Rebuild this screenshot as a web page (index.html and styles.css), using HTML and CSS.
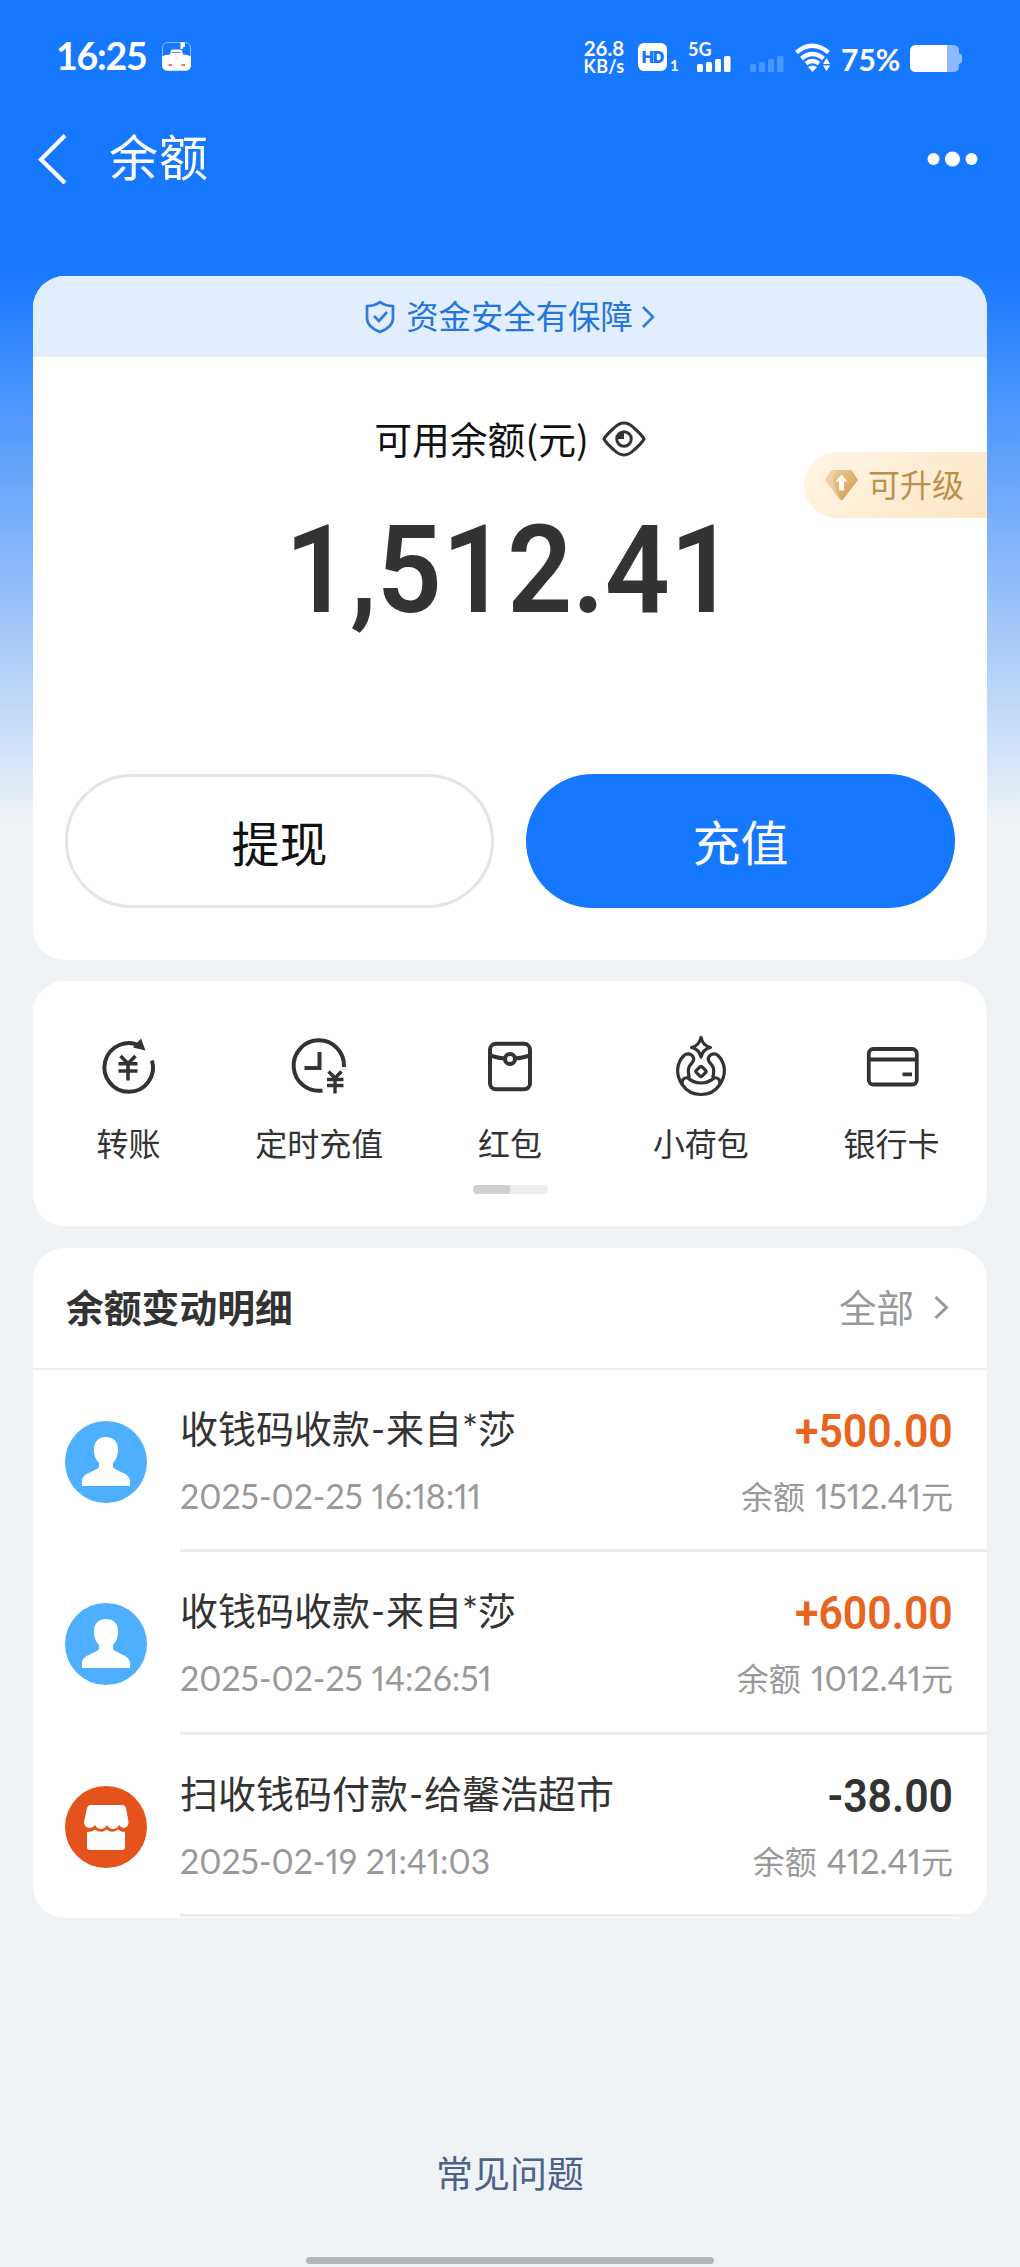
FILE: index.html
```html
<!DOCTYPE html>
<html lang="zh-CN">
<head>
<meta charset="utf-8">
<title>余额</title>
<link rel="stylesheet" href="styles.css">
</head>
<body>
<div class="page">
  <div class="status">
    <span class="clock">16:25</span>
    <svg class="app-icon" width="29" height="29" viewBox="0 0 29 29"><rect x=".5" y=".5" width="28" height="28" rx="5" fill="none" stroke="#8dbcff" stroke-width="1"/><path d="M0 14.500Q3 12.500 8 12.500L9 8.500Q9.500 7.500 11 7.500H17.500Q19.500 7.500 20 8.500L21 12.500Q26 12.500 29 14.500V23Q29 28.500 23 28.500H6Q0 28.500 0 23Z" fill="#fff"/><path d="M18.500 .5h4.500v4.500h-2v2h-2.500z" fill="#fff"/><path d="M9.500 10.500h9" stroke="#5a9cf5" stroke-width="1"/><path d="M6.500 23h3.500M19.500 23h3.500" stroke="#d9532d" stroke-width="1.400"/><path d="M13.500 15.800h2" stroke="#e8b28a" stroke-width="1"/></svg>
    <div class="speed"><span class="rate">26.8</span><span class="unit">KB/s</span></div>
    <div class="hd">HD</div>
    <span class="sim">1</span>
    <div class="net"><span class="gen">5G</span>
      <svg width="34" height="16" viewBox="0 0 34 16" fill="#fff"><rect x="0" y="8" width="6" height="8" rx="1.500"/><rect x="9" y="6" width="6" height="10" rx="1.500"/><rect x="18" y="3" width="6" height="13" rx="1.500"/><rect x="27" y="0" width="6.500" height="16" rx="1.500"/></svg>
    </div>
    <svg class="weak" width="34" height="16" viewBox="0 0 34 16" fill="#4a95ff"><rect x="0" y="8" width="6" height="8" rx="1.500"/><rect x="9" y="6" width="6" height="10" rx="1.500"/><rect x="18" y="3" width="6" height="13" rx="1.500"/><rect x="27" y="0" width="6.500" height="16" rx="1.500"/></svg>
    <svg class="wifi" width="36" height="29" viewBox="0 0 36 29"><g fill="none" stroke="#fff" stroke-width="4.200"><path d="M1.500 9.500Q17 -4 33.500 9.500"/><path d="M6.500 15.500Q17.500 6.500 28.500 15.500"/><path d="M11 20.500Q17.500 15.500 24 20.500"/></g><path d="M13 24Q17.500 21 22 24L17.500 29Z" fill="#fff"/><path d="M28 21l3.500-6 3.500 6zM28 22.500h7L31.500 28z" fill="#fff"/></svg>
    <span class="percent">75%</span>
    <svg class="battery" width="52" height="27" viewBox="0 0 52 27"><path d="M36 0h7q6 0 6 6v2q3 1 3 3v5q0 2-3 3v2q0 6-6 6h-7z" fill="#8dbbff"/><path d="M6 0h31v27H6q-6 0-6-6V6q0-6 6-6z" fill="#fff"/></svg>
  </div>

  <div class="nav">
    <svg class="back" width="30" height="50" viewBox="0 0 30 50"><path d="M28 1.500L4 25.500L28 49" fill="none" stroke="#fff" stroke-width="4.200"/></svg>
    <h1 class="nav-title">余额</h1>
    <svg class="more" width="52" height="16" viewBox="0 0 52 16" fill="#fff"><circle cx="6.500" cy="8" r="6"/><circle cx="25.500" cy="8" r="7.600"/><circle cx="44.500" cy="8" r="6"/></svg>
  </div>

  <section class="card balance">
    <div class="safe">
      <svg width="30" height="34" viewBox="0 0 30 34" fill="none" stroke="#2f7be0" stroke-width="2.700"><path d="M15 2Q20 6 28 6V18Q28 27 15 32Q2 27 2 18V6Q10 6 15 2Z" stroke-linejoin="round"/><path d="M9 16l5 5 8-9"/></svg>
      <span class="safe-text">资金安全有保障</span>
      <svg class="safe-arrow" width="14" height="24" viewBox="0 0 14 24"><path d="M2 2l10 10L2 22" fill="none" stroke="#2f7be0" stroke-width="2.600"/></svg>
    </div>
    <div class="avail">
      <span>可用余额(元)</span>
      <svg width="44" height="36" viewBox="0 0 44 36"><path d="M2 18Q4 14 12 7Q17 2 22 2T32 7Q40 14 42 18Q40 22 32 29Q27 34 22 34T12 29Q4 22 2 18Z" fill="none" stroke="#333" stroke-width="3"/><circle cx="22" cy="18" r="7.300" fill="none" stroke="#333" stroke-width="3"/><path d="M22 18v-7a7 7 0 0 0-7 7z" fill="#333"/></svg>
    </div>
    <div class="upgrade">
      <svg width="33" height="32" viewBox="0 0 33 32"><defs><linearGradient id="gem" x1="0" y1="0" x2="1" y2="1"><stop offset="0" stop-color="#f0d2a4"/><stop offset="1" stop-color="#cf9448"/></linearGradient></defs><path d="M8 1h17q1.500 0 2.500 1.500L33 11 18 30.500q-1.500 1.500-3 0L0 11l5.500-8.500Q6.500 1 8 1z" fill="url(#gem)"/><path d="M0 11L6 2h4L8 12l8 19z" fill="#f3dab5" opacity=".5"/><path d="M16.500 5.500l6 7h-3.500v9h-5v-9h-3.500z" fill="#fff8ec"/></svg>
      <span>可升级</span>
    </div>
    <div class="total">1,512.41</div>
    <div class="actions">
      <div class="btn withdraw">提现</div>
      <div class="btn recharge">充值</div>
    </div>
  </section>

  <section class="card tools">
    <div class="tool-row">
      <div class="tool">
        <svg width="64" height="64" viewBox="0 0 64 64" fill="none" stroke="#333" stroke-width="4"><path d="M56 25.500A24.300 24.300 0 1 1 45 11.500"/><path d="M45 3.500l4.500 12L37 12.500z" fill="#333" stroke="none"/><path d="M24.500 21l7.500 7.500 7.500-7.500M22.500 28.800h19M22.500 36h19M32 28v17.500" stroke-width="3.600"/></svg>
        <span>转账</span>
      </div>
      <div class="tool">
        <svg width="64" height="64" viewBox="0 0 64 64" fill="none" stroke="#333" stroke-width="4"><path d="M57 32A25.200 25.200 0 1 0 35.500 55.500"/><path d="M32.500 17v16H17.500"/><path d="M41.500 36.500l6.500 6.500 6.500-6.500M40 44.500h16.500M40 50.500h16.500M48 43v15.500" stroke-width="3.400"/></svg>
        <span>定时充值</span>
      </div>
      <div class="tool">
        <svg width="64" height="64" viewBox="0 0 64 64" fill="none" stroke="#333" stroke-width="4"><rect x="12" y="8.800" width="40" height="45.500" rx="6"/><path d="M12 20.500Q20 23 27 23.500M52 20.500Q44 23 37 23.500"/><circle cx="32" cy="24" r="5"/></svg>
        <span>红包</span>
      </div>
      <div class="tool">
        <svg width="64" height="64" viewBox="0 0 64 64" fill="none" stroke="#333" stroke-width="3.200" stroke-linejoin="round"><path d="M32 2.500Q34 11 41.500 12.500Q34 14 32 22Q30 14 22.500 12.500Q30 11 32 2.500Z"/><path d="M13.500 50C7 41 6.500 29 15 20.500Q18.500 17.500 22.500 20Q26 23 24 26.500L20.500 31Q18 36 20.500 42.500"/><path d="M50.500 50C57 41 57.500 29 49 20.500Q45.500 17.500 41.500 20Q38 23 40 26.500L43.500 31Q46 36 43.500 42.500"/><path d="M18.500 42.500Q11.500 43.500 13.500 50Q20 59.500 32 59.500T50.500 50Q52.500 43.500 45.500 42.500Q40 48 32 48T18.500 42.500Z"/><rect x="28" y="32.500" width="8" height="8" rx="1.500" transform="rotate(45 32 36.500)"/></svg>
        <span>小荷包</span>
      </div>
      <div class="tool">
        <svg width="64" height="64" viewBox="0 0 64 64" fill="none" stroke="#333" stroke-width="3.800"><rect x="8.800" y="14" width="48" height="35.500" rx="4.500"/><path d="M8.800 24.500h48M42.500 39.300h9.500"/></svg>
        <span>银行卡</span>
      </div>
    </div>
    <div class="pager"><div class="pager-on"></div></div>
  </section>

  <section class="card detail">
    <div class="detail-head">
      <h2>余额变动明细</h2>
      <span class="all">全部</span>
      <svg width="16" height="24" viewBox="0 0 16 24"><path d="M1.500 1L12.500 11.500 1.500 22" fill="none" stroke="#999" stroke-width="3"/></svg>
    </div>
    <div class="row">
      <svg class="avatar" width="82" height="82" viewBox="0 0 82 82"><circle cx="41" cy="41" r="41" fill="#4fafff"/><path d="M41 16c8 0 12 5 12 12 0 7-2 11-5 14v4c4 5 17 6 17 14v5H17v-5c0-8 13-9 17-14v-4c-3-3-5-7-5-14 0-7 4-12 12-12z" fill="#fff"/></svg>
      <div class="row-body">
        <div class="line"><span class="name">收钱码收款<i>-</i>来自<i>*</i>莎</span><span class="amount in">+500.00</span></div>
        <div class="line sub"><span class="date">2025-02-25 16:18:11</span><span class="left">余额 <b>1512.41</b>元</span></div>
      </div>
    </div>
    <div class="row">
      <svg class="avatar" width="82" height="82" viewBox="0 0 82 82"><circle cx="41" cy="41" r="41" fill="#4fafff"/><path d="M41 16c8 0 12 5 12 12 0 7-2 11-5 14v4c4 5 17 6 17 14v5H17v-5c0-8 13-9 17-14v-4c-3-3-5-7-5-14 0-7 4-12 12-12z" fill="#fff"/></svg>
      <div class="row-body">
        <div class="line"><span class="name">收钱码收款<i>-</i>来自<i>*</i>莎</span><span class="amount in">+600.00</span></div>
        <div class="line sub"><span class="date">2025-02-25 14:26:51</span><span class="left">余额 <b>1012.41</b>元</span></div>
      </div>
    </div>
    <div class="row">
      <svg class="avatar" width="82" height="82" viewBox="0 0 82 82"><circle cx="41" cy="41" r="41" fill="#e4531c"/><path d="M25 19h32q3 0 4 3l2.500 14q0 5-4.500 6-3 0-5-3-2 4-6 4t-6-4q-2 4-6 4t-6-4q-2 3-6 3-5-1-5-6l3-14q1-3 3-3z" fill="#fff"/><path d="M22 46q5 0 8-2.500 6 4.500 11.500 0 6 4.500 11.500 0 3 2.500 7 2.500v15q0 3-3 3H25q-3 0-3-3z" fill="#fff"/></svg>
      <div class="row-body">
        <div class="line"><span class="name">扫收钱码付款<i>-</i>给馨浩超市</span><span class="amount">-38.00</span></div>
        <div class="line sub"><span class="date">2025-02-19 21:41:03</span><span class="left">余额 <b>412.41</b>元</span></div>
      </div>
    </div>
  </section>

  <div class="faq">常见问题</div>
  <div class="home-bar"></div>
</div>
</body>
</html>
```

FILE: styles.css
```css
* { box-sizing: border-box; }
body {
  margin: 0;
  background: #eff3f6;
  color: #333;
  font-family: "Noto Sans CJK SC", sans-serif;
}
svg { display: block; flex: none; }
i { font-style: normal; }
.page {
  width: 1020px;
  height: 2267px;
  overflow: hidden;
  display: flex;
  flex-direction: column;
  padding: 0 33px;
  background: linear-gradient(180deg, #1677ff 0, #1677ff 265px, #eff3f6 825px);
}

.status {
  height: 116px;
  display: flex;
  align-items: flex-start;
  color: #fff;
  font-family: Lato, sans-serif;
  font-weight: 700;
  white-space: nowrap;
}
.clock { margin: 33px 0 0 23px; width: 105px; font-size: 37.500px; line-height: 46px; letter-spacing: -1.200px; }
.app-icon { margin-top: 42px; margin-left: 1px; }
.speed { margin: 36px 0 0 390px; width: 46px; display: flex; flex-direction: column; align-items: center; }
.rate { font-size: 20.500px; line-height: 25px; }
.unit { margin-top: -5px; font-size: 18px; line-height: 21px; letter-spacing: .3px; }
.hd { margin: 43px 0 0 11px; width: 29px; height: 28px; border-radius: 6px; background: #fff; color: #1677ff; font: 900 16px/28px Inter, sans-serif; text-align: center; letter-spacing: -1px; }
.sim { margin: 56px 0 0 3px; width: 18px; font-size: 15px; line-height: 18px; }
.net { margin-top: 43px; width: 44px; height: 29px; display: flex; flex-direction: column; align-items: flex-end; }
.gen { align-self: flex-start; font-size: 18px; line-height: 13px; }
.net svg { margin-right: 1px; }
.weak { margin: 56px 0 0 18px; }
.wifi { margin: 43px 0 0 11px; }
.percent { margin: 43px 0 0 10px; width: 62px; font-size: 30px; line-height: 33px; }
.battery { margin: 45px 0 0 7px; }

.nav { height: 160px; display: flex; align-items: flex-start; padding-top: 18px; }
.back { margin-left: 4px; }
.nav-title { margin: -9px 0 0 42px; color: #fff; font-size: 49px; line-height: 60px; font-weight: 400; letter-spacing: 1px; }
.more { margin: 17px 8px 0 auto; }

.card { flex: none; background: #fff; border-radius: 32px; overflow: hidden; }

.balance { height: 684px; display: flex; flex-direction: column; }
.safe { height: 81px; background: #e2edfd; color: #2376dc; display: flex; align-items: center; justify-content: center; font-size: 32.400px; }
.safe-text { margin: -4px 8px 0 11px; line-height: 48px; }
.avail { margin-top: 55px; height: 54px; display: flex; align-items: center; justify-content: center; gap: 13px; color: #111; font-size: 37.800px; line-height: 54px; }
.avail span { margin-top: -3px; }
.upgrade { align-self: flex-end; margin-top: -14px; width: 183px; height: 66px; padding-left: 21px; border-radius: 33px 0 0 33px; background: linear-gradient(135deg, #fff5e6, #fde6c4); color: #bd8f4c; display: flex; align-items: center; gap: 10px; font-size: 32px; line-height: 48px; }
.upgrade span { margin-top: -4px; }
.total { margin-top: -13px; height: 132px; text-align: center; font: 600 122px/132px Roboto, sans-serif; transform: scaleX(.935); }
.actions { margin-top: 137px; padding: 0 32px; display: flex; gap: 32px; }
.btn { width: 429px; height: 134px; border-radius: 67px; font-size: 48px; line-height: 133px; text-align: center; }
.withdraw { border: 3px solid #e5e5e5; color: #111; line-height: 128px; }
.recharge { background: #1677ff; color: #fff; }

.tools { margin-top: 21px; height: 245px; }
.tool-row { display: flex; padding-top: 54px; }
.tool { flex: 1; display: flex; flex-direction: column; align-items: center; font-size: 32px; line-height: 46px; }
.tool span { margin-top: 20px; }
.pager { margin: 20px auto 0; width: 75px; height: 9px; border-radius: 4px; background: #eee; overflow: hidden; }
.pager-on { width: 37px; height: 9px; background: #d0d0d0; }

.detail { margin-top: 22px; height: 670px; }
.detail-head { height: 122px; border-bottom: 2px solid #ebebeb; padding: 0 37px 0 33px; display: flex; align-items: center; }
h2 { margin: -4px auto 0 0; font-size: 37.800px; line-height: 56px; font-weight: 700; }
.all { color: #999; font-size: 37.500px; line-height: 56px; margin: -4px 20px 0 0; }
.row { height: 182.300px; display: flex; padding-left: 32px; }
.avatar { margin-top: 51px; }
.row-body { margin-left: 33px; flex: 1; padding: 29px 34px 0 0; border-bottom: 3px solid #eee; }
.line { display: flex; justify-content: space-between; height: 56px; line-height: 56px; white-space: nowrap; }
.name { font-size: 38px; }
.name i { font-family: Lato, sans-serif; display: inline-block; width: 16px; text-align: center; }
.amount { font: 600 46px/65px Roboto, sans-serif; transform: scaleX(.93); transform-origin: right; }
.in { color: #e8651f; }
.sub { margin-top: 12px; color: #999; }
.date { font: 400 33.800px/58px Lato, sans-serif; font-feature-settings: "pnum"; }
.left { font-size: 32px; word-spacing: 3px; }
.left b { font: 400 34px/56px Lato, sans-serif; font-feature-settings: "pnum"; }

.faq { margin-top: 226px; text-align: center; color: #4d6288; font-size: 37px; line-height: 56px; }
.home-bar { margin: 57px auto 0; width: 408px; height: 7px; border-radius: 4px; background: #b3b8bc; flex: none; }
```
